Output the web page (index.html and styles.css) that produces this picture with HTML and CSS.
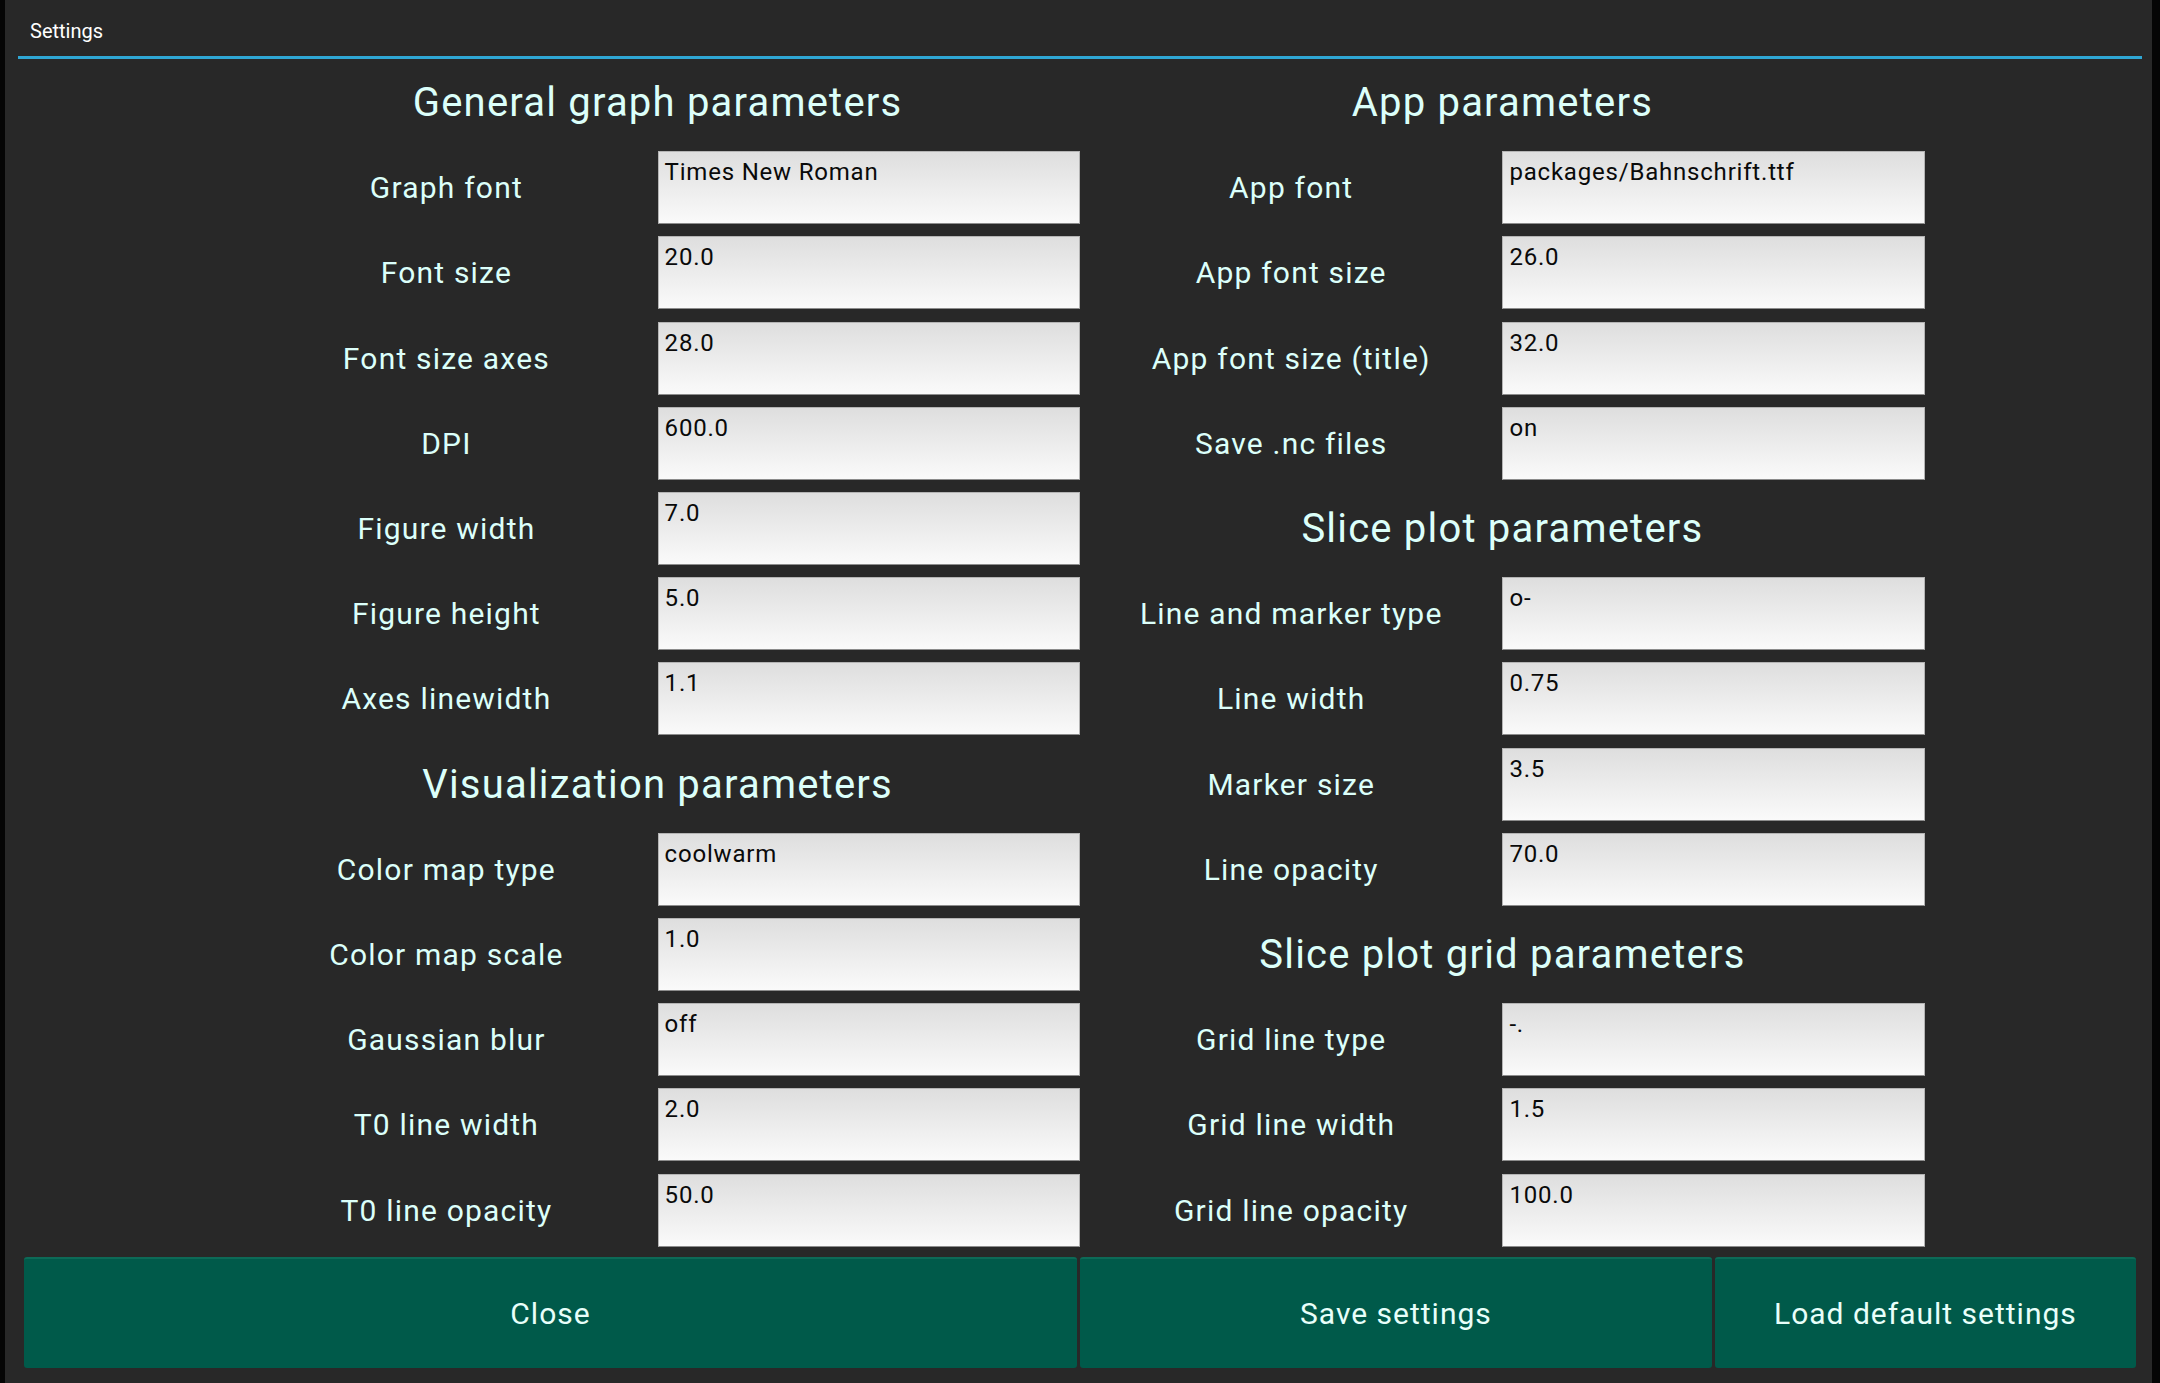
FILE: index.html
```html
<!DOCTYPE html>
<html lang="en">
<head>
  <meta charset="UTF-8" />
  <meta name="viewport" content="width=device-width, initial-scale=1.0" />
  <title>Settings</title>
  <link rel="stylesheet" href="styles.css">
</head>
<body>

  <div class="popup">
    <!-- Title bar -->
    <div class="popup-title">Settings</div>
    <div class="separator"></div>

    <div class="panels">
      <!-- Left side -->
      <div class="panel panel-left">
        <h2 class="heading">General graph parameters</h2>
        <label class="label">Graph font</label>
        <textarea class="field" rows="1">Times New Roman</textarea>
        <label class="label">Font size</label>
        <textarea class="field" rows="1">20.0</textarea>
        <label class="label">Font size axes</label>
        <textarea class="field" rows="1">28.0</textarea>
        <label class="label">DPI</label>
        <textarea class="field" rows="1">600.0</textarea>
        <label class="label">Figure width</label>
        <textarea class="field" rows="1">7.0</textarea>
        <label class="label">Figure height</label>
        <textarea class="field" rows="1">5.0</textarea>
        <label class="label">Axes linewidth</label>
        <textarea class="field" rows="1">1.1</textarea>

        <h2 class="heading">Visualization parameters</h2>
        <label class="label">Color map type</label>
        <textarea class="field" rows="1">coolwarm</textarea>
        <label class="label">Color map scale</label>
        <textarea class="field" rows="1">1.0</textarea>
        <label class="label">Gaussian blur</label>
        <textarea class="field" rows="1">off</textarea>
        <label class="label">T0 line width</label>
        <textarea class="field" rows="1">2.0</textarea>
        <label class="label">T0 line opacity</label>
        <textarea class="field" rows="1">50.0</textarea>
      </div>

      <!-- Right side -->
      <div class="panel panel-right">
        <h2 class="heading">App parameters</h2>
        <label class="label">App font</label>
        <textarea class="field" rows="1">packages/Bahnschrift.ttf</textarea>
        <label class="label">App font size</label>
        <textarea class="field" rows="1">26.0</textarea>
        <label class="label">App font size (title)</label>
        <textarea class="field" rows="1">32.0</textarea>
        <label class="label">Save .nc files</label>
        <textarea class="field" rows="1">on</textarea>

        <h2 class="heading">Slice plot parameters</h2>
        <label class="label">Line and marker type</label>
        <textarea class="field" rows="1">o-</textarea>
        <label class="label">Line width</label>
        <textarea class="field" rows="1">0.75</textarea>
        <label class="label">Marker size</label>
        <textarea class="field" rows="1">3.5</textarea>
        <label class="label">Line opacity</label>
        <textarea class="field" rows="1">70.0</textarea>

        <h2 class="heading">Slice plot grid parameters</h2>
        <label class="label">Grid line type</label>
        <textarea class="field" rows="1">-.</textarea>
        <label class="label">Grid line width</label>
        <textarea class="field" rows="1">1.5</textarea>
        <label class="label">Grid line opacity</label>
        <textarea class="field" rows="1">100.0</textarea>
      </div>
    </div>

    <!-- Bottom buttons -->
    <div class="buttons">
      <button type="button" class="btn">Close</button>
      <button type="button" class="btn">Save settings</button>
      <button type="button" class="btn">Load default settings</button>
    </div>
  </div>

</body>
</html>
```

FILE: styles.css
```css
body, html {
  margin: 0;
  padding: 0;
  background-color: #050505;
  font-family: Roboto, "Noto Sans", sans-serif;
  overflow: hidden;
}
.popup {
  margin-left: 5px;
  width: 2147px;
  height: 1383px;
  background: #282828;
}
.popup-title {
  height: 50px;
  padding: 6px 0 0 25px;
  display: flex;
  align-items: center;
  font-size: 20px;
  color: #ffffff;
}
.separator {
  height: 3px;
  margin: 0 10px 0 13px;
  background: #2fa7d4;
}
.panels {
  display: grid;
  grid-template-columns: 1fr 1fr;
  margin: 1px 16px 0 19px;
}
.panel {
  display: grid;
  grid-template-columns: repeat(5, 1fr);
  grid-template-rows: repeat(14, 85.2px);
  align-items: center;
}
.heading {
  margin: 0;
  font-size: 40px;
  font-weight: normal;
  letter-spacing: 1.2px;
  text-align: center;
  color: #dcfffa;
}
.label {
  font-size: 30px;
  letter-spacing: 1.2px;
  text-align: center;
  color: #dcfffa;
}
.field {
  box-sizing: border-box;
  height: 73px;
  width: 100%;
  margin: 0;
  padding: 6px;
  resize: none;
  overflow: hidden;
  font-family: Roboto, "Noto Sans", sans-serif;
  font-size: 24px;
  letter-spacing: 0.8px;
  line-height: 28px;
  color: #0a0a0a;
  border: 1px solid #b4b4b4;
  border-bottom-color: #8c8c8c;
  border-radius: 0;
  background: linear-gradient(#dedede, #fafafa);
}
.panel-left .heading { grid-column: 2 / 6; }
.panel-left .label { grid-column: 2 / 4; }
.panel-left .field { grid-column: 4 / 6; }
.panel-right .heading { grid-column: 1 / 5; }
.panel-right .label { grid-column: 1 / 3; }
.panel-right .field { grid-column: 3 / 5; }
.buttons {
  display: grid;
  grid-template-columns: 5fr 3fr 2fr;
  gap: 3px;
  height: 111px;
  margin: 4px 16px 0 19px;
}
.btn {
  border: none;
  border-top: 2px solid #0d6a57;
  border-radius: 3px;
  background: #005a4a;
  color: #e8fffa;
  font-family: Roboto, "Noto Sans", sans-serif;
  font-size: 30px;
  letter-spacing: 1px;
  cursor: pointer;
}
```
